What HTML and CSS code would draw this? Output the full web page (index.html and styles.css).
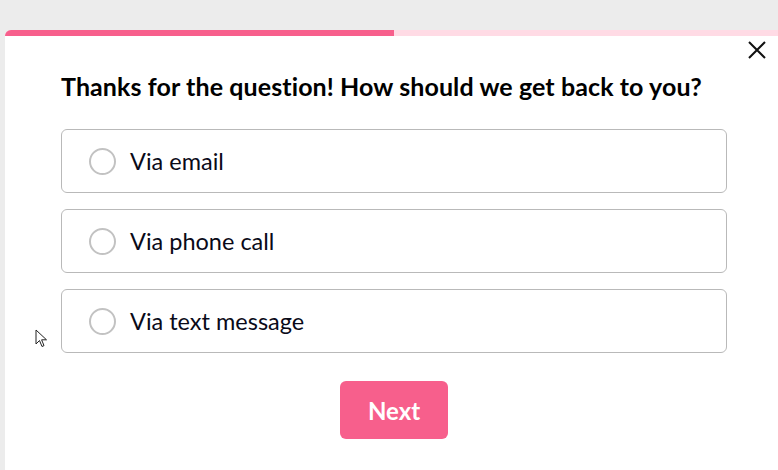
FILE: index.html
```html
<!DOCTYPE html>
<html>
<head>
<meta charset="utf-8">
<link rel="stylesheet" href="styles.css">
</head>
<body>
<div class="card">
  <div class="progress"><div class="progress-fill" style="width: 389px"></div></div>
  <button class="close" aria-label="Close">
    <svg width="18" height="18" viewBox="0 0 18 18"><path d="M1 1L17 17M17 1L1 17" stroke="#111" stroke-width="2" fill="none"/></svg>
  </button>
  <div class="content">
    <h1 class="title">Thanks for the question! How should we get back to you?</h1>
    <div class="options">
      <label class="option"><span class="radio"></span><span class="label">Via email</span></label>
      <label class="option"><span class="radio"></span><span class="label">Via phone call</span></label>
      <label class="option"><span class="radio"></span><span class="label">Via text message</span></label>
    </div>
    <div class="actions"><button class="next">Next</button></div>
  </div>
</div>
<svg class="cursor" width="14" height="20" viewBox="0 0 14 20"><path d="M1 1L1 15L4.5 11.5L7 17.5L9 16.6L6.6 10.8L11.5 10.8Z" fill="#fff" stroke="#222" stroke-width="1"/></svg>
</body>
</html>
```
FILE: styles.css
```css
html, body {
  margin: 0;
  padding: 0;
  background: #ececec;
  font-family: Lato, "Open Sans", sans-serif;
  font-variant-ligatures: none;
  overflow: hidden;
  height: 470px;
}
body {
  padding: 30px 0 0 5px;
  box-sizing: border-box;
}
.card {
  position: relative;
  background: #fff;
  height: 440px;
  border-top-left-radius: 6px;
  overflow: hidden;
}
.progress {
  height: 6px;
  background: #ffdbe5;
}
.progress-fill {
  height: 100%;
  background: #f75f8c;
}
.close {
  position: absolute;
  top: 11px;
  right: 12px;
  border: 0;
  background: none;
  padding: 0;
  width: 18px;
  height: 18px;
  cursor: pointer;
}
.close svg { display: block; }
.content {
  padding: 0 0 0 56px;
  width: 666px;
}
.title {
  margin: 0;
  padding-top: 36px;
  font-size: 25px;
  font-weight: 700;
  color: #000;
  line-height: 28px;
  letter-spacing: 0.1px;
  white-space: nowrap;
}
.options {
  display: flex;
  flex-direction: column;
  gap: 16px;
  margin-top: 29px;
}
.option {
  display: flex;
  align-items: center;
  height: 64px;
  box-sizing: border-box;
  border: 1.5px solid #b9b9b9;
  border-radius: 6px;
  padding-left: 27px;
}
.radio {
  width: 27px;
  height: 27px;
  border: 2px solid #c2c2c2;
  border-radius: 50%;
  box-sizing: border-box;
  flex: none;
}
.label {
  margin-left: 14px;
  font-size: 23.5px;
  color: #0a0a18;
}
.actions {
  display: flex;
  justify-content: center;
  margin-top: 28px;
}
.next {
  width: 108px;
  height: 58px;
  border: 0;
  border-radius: 6px;
  background: #f75f8c;
  color: #fff;
  font-family: Lato, sans-serif;
  font-weight: 700;
  font-size: 24px;
}
.cursor {
  position: absolute;
  left: 35px;
  top: 329px;
}
```
